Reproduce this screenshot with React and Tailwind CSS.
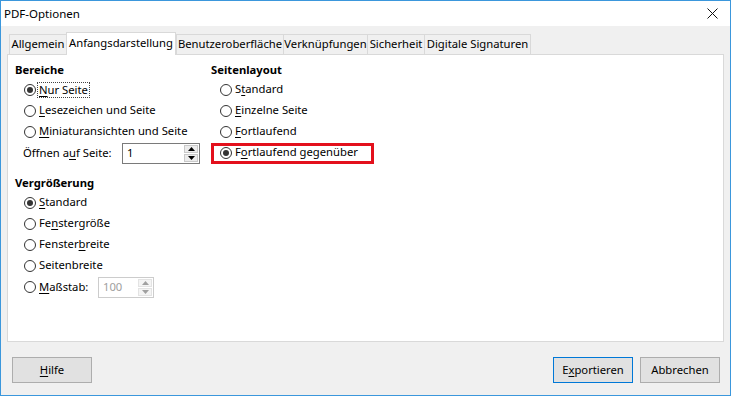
import React from "react";

const font = { fontFamily: '"Noto Sans", "Open Sans", sans-serif' };

const Radio = ({ checked, focus, children }) => (
  <div className="flex h-[21px] items-center pl-[9px]">
    <span className="flex h-[12px] w-[12px] shrink-0 items-center justify-center rounded-full border border-[#333333] bg-white">
      {checked && <span className="h-[6px] w-[6px] rounded-full bg-[#333333]" />}
    </span>
    {focus ? (
      <span className="ml-[1px] border border-dotted border-[#444] px-[1px] leading-[14px]">{children}</span>
    ) : (
      <span className="ml-[3px]">{children}</span>
    )}
  </div>
);

const Arrow = ({ up, disabled }) => (
  <svg width="7" height="4" viewBox="0 0 7 4">
    <path d={up ? "M0 4 L3.5 0 L7 4 Z" : "M0 0 L3.5 4 L7 0 Z"} fill={disabled ? "#a0a0a0" : "#000"} />
  </svg>
);

const Spin = ({ value, width, disabled }) => (
  <div
    className={`flex h-[21px] items-stretch border bg-white ${
      disabled ? "border-[#cccccc] text-[#a0a0a0]" : "border-[#7a7a7a] text-black"
    } ${width}`}
  >
    <span className="flex flex-1 items-center pl-[4px]">{value}</span>
    <div className="flex w-[16px] flex-col gap-px p-px">
      <span className={`flex flex-1 items-center justify-center border ${disabled ? "border-[#e3e3e3] bg-[#f4f4f4]" : "border-[#c9c9c9] bg-[#ececec]"}`}>
        <Arrow up disabled={disabled} />
      </span>
      <span className={`flex flex-1 items-center justify-center border ${disabled ? "border-[#e3e3e3] bg-[#f4f4f4]" : "border-[#c9c9c9] bg-[#ececec]"}`}>
        <Arrow disabled={disabled} />
      </span>
    </div>
  </div>
);

const tabs = [
  { label: "Allgemein", w: "w-[57px]" },
  { label: "Anfangsdarstellung", w: "w-[110px]", active: true },
  { label: "Benutzeroberfläche", w: "w-[107px]" },
  { label: "Verknüpfungen", w: "w-[84px]" },
  { label: "Sicherheit", w: "w-[57px]" },
  { label: "Digitale Signaturen", w: "w-[107px]", last: true },
];

const Header = ({ children }) => (
  <div className="flex h-[17px] items-center font-bold">{children}</div>
);

export default function App() {
  return (
    <div
      style={font}
      className="flex h-[396px] w-[731px] flex-col border border-[#3b97dc] bg-[#f0f0f0] text-[11.25px] text-black"
    >
      {/* title bar */}
      <div className="flex h-[25px] items-center justify-between bg-white pl-[3px] pr-[12px] text-[11.5px]">
        <span>PDF-Optionen</span>
        <svg width="11" height="11" viewBox="0 0 11 11">
          <path d="M0.5 0.5 L10.5 10.5 M10.5 0.5 L0.5 10.5" stroke="#111" strokeWidth="1" />
        </svg>
      </div>

      <div className="flex flex-1 flex-col px-[6px] pt-[6px]">
        {/* tabs */}
        <div className="relative z-10 -mb-px flex h-[23px] items-end pl-[2px]">
          {tabs.map((t) =>
            t.active ? (
              <div
                key={t.label}
                className={`flex h-[23px] items-center justify-center border border-b-0 border-[#d9d9d9] bg-white pb-[2px] ${t.w}`}
              >
                {t.label}
              </div>
            ) : (
              <div
                key={t.label}
                className={`flex h-[21px] items-center justify-center border-l border-t border-b border-[#d9d9d9] bg-[#f0f0f0] ${
                  t.last ? "border-r" : ""
                } ${t.w}`}
              >
                {t.label}
              </div>
            )
          )}
        </div>

        {/* panel */}
        <div className="flex h-[288px] border border-[#d9d9d9] bg-white pl-[7px] pt-[7px]">
          <div className="flex w-[196px] flex-col">
            <Header>Bereiche</Header>
            <Radio checked focus>
              <u className="underline-offset-[2px]">N</u>ur Seite
            </Radio>
            <Radio>
              <u className="underline-offset-[2px]">L</u>esezeichen und Seite
            </Radio>
            <Radio>
              <u className="underline-offset-[2px]">M</u>iniaturansichten und Seite
            </Radio>
            <div className="flex h-[22px] items-center pl-[8px]">
              <span className="w-[99px]">
                Öffnen a<u className="underline-offset-[2px]">u</u>f Seite:
              </span>
              <Spin value="1" width="w-[78px]" />
            </div>

            <div className="mt-[11px]">
              <Header>Vergrößerung</Header>
            </div>
            <Radio checked>
              <u className="underline-offset-[2px]">S</u>tandard
            </Radio>
            <Radio>
              Fe<u className="underline-offset-[2px]">n</u>stergröße
            </Radio>
            <Radio>
              Fenster<u className="underline-offset-[2px]">b</u>reite
            </Radio>
            <Radio>Seitenbreite</Radio>
            <div className="flex h-[22px] items-center pl-[9px]">
              <span className="flex h-[12px] w-[12px] shrink-0 rounded-full border border-[#333333] bg-white" />
              <span className="ml-[3px] w-[59px]">
                <u className="underline-offset-[2px]">M</u>aßstab:
              </span>
              <Spin value="100" width="w-[56px]" disabled />
            </div>
          </div>

          <div className="flex flex-col">
            <Header>Seitenlayout</Header>
            <Radio>
              S<u className="underline-offset-[2px]">t</u>andard
            </Radio>
            <Radio>
              <u className="underline-offset-[2px]">E</u>inzelne Seite
            </Radio>
            <Radio>
              <u className="underline-offset-[2px]">F</u>ortlaufend
            </Radio>
            <div className="relative">
              <Radio checked>
                F<u className="underline-offset-[2px]">o</u>rtlaufend gegenüber
              </Radio>
              <span className="absolute left-0 top-[1px] h-[21px] w-[163px] border-[3px] border-[#e3101c]" />
            </div>
          </div>
        </div>

        {/* footer */}
        <div className="flex items-start pt-[15px] pl-[5px] pr-[4px]">
          <button className="flex h-[26px] w-[80px] items-center justify-center border border-[#adadad] bg-[#e1e1e1]">
            <u className="underline-offset-[2px]">H</u>ilfe
          </button>
          <div className="flex-1" />
          <button className="flex h-[26px] w-[80px] items-center justify-center border border-[#0078d7] bg-[#e1e1e1]">
            E<u className="underline-offset-[2px]">x</u>portieren
          </button>
          <button className="ml-[7px] flex h-[26px] w-[80px] items-center justify-center border border-[#adadad] bg-[#e1e1e1]">
            Abbrechen
          </button>
        </div>
      </div>
    </div>
  );
}
